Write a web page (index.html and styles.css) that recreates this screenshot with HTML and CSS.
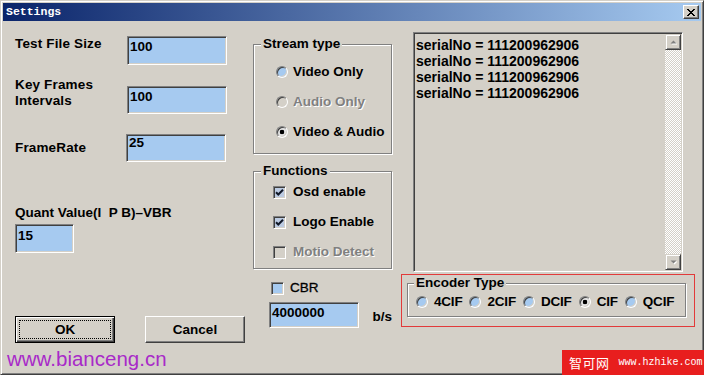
FILE: index.html
```html
<!DOCTYPE html>
<html>
<head>
<meta charset="utf-8">
<title>Settings</title>
<link rel="stylesheet" href="styles.css">
</head>
<body>
<div class="window">
  <div class="titlebar">
    <span class="title">Settings</span>
    <span class="close"><svg width="8" height="7" viewBox="0 0 8 7" shape-rendering="crispEdges"><path d="M0 0h2v1H0zM6 0h2v1H6zM1 1h2v1H1zM5 1h2v1H5zM2 2h4v1H2zM3 3h2v1H3zM2 4h4v1H2zM1 5h2v1H1zM5 5h2v1H5zM0 6h2v1H0zM6 6h2v1H6z" fill="#000"/></svg></span>
  </div>
  <div class="content">
    <div class="col-left">
      <div class="row row1"><span class="lbl">Test File Size</span><span class="edit e1">100</span></div>
      <div class="row row2"><span class="lbl">Key Frames<br>Intervals</span><span class="edit e2">100</span></div>
      <div class="row row3"><span class="lbl lbl3">FrameRate</span><span class="edit e3">25</span></div>
      <div class="lbl quant">Quant Value(I&nbsp; P B)–VBR</div>
      <span class="edit e4">15</span>
      <div class="buttons">
        <div class="btn btn-default"><span class="focus">OK</span></div>
        <div class="btn">Cancel</div>
      </div>
    </div>

    <div class="col-mid">
      <fieldset class="group stream">
        <legend>Stream type</legend>
        <div class="opt"><span class="radio"></span><span>Video Only</span></div>
        <div class="opt disabled"><span class="radio"></span><span>Audio Only</span></div>
        <div class="opt"><span class="radio checked"></span><span>Video &amp; Audio</span></div>
      </fieldset>
      <fieldset class="group functions">
        <legend>Functions</legend>
        <div class="opt"><span class="check on"><svg width="9" height="7" viewBox="0 0 9 7"><path d="M1 3.2l2.3 2.3L8 0.8" fill="none" stroke="#101828" stroke-width="2"/></svg></span><span>Osd enable</span></div>
        <div class="opt"><span class="check on"><svg width="9" height="7" viewBox="0 0 9 7"><path d="M1 3.2l2.3 2.3L8 0.8" fill="none" stroke="#101828" stroke-width="2"/></svg></span><span>Logo Enable</span></div>
        <div class="opt disabled"><span class="check"></span><span>Motio Detect</span></div>
      </fieldset>
      <div class="opt cbr"><span class="check blue"></span><span>CBR</span></div>
      <div class="rate-row"><span class="edit e5">4000000</span><span class="unit">b/s</span></div>
    </div>

    <div class="col-right">
      <div class="listbox">
        <div class="items">
          <div>serialNo = 111200962906</div>
          <div>serialNo = 111200962906</div>
          <div>serialNo = 111200962906</div>
          <div>serialNo = 111200962906</div>
        </div>
        <div class="vscroll">
          <div class="sbtn"><svg width="7" height="5" viewBox="0 0 7 5"><path d="M1.5 4.5h6L4.5 1.5z" fill="#fff"/><path d="M0.5 3.5h6L3.5 0.5z" fill="#808080"/></svg></div>
          <div class="track"></div>
          <div class="sbtn"><svg width="7" height="5" viewBox="0 0 7 5"><path d="M1.5 1.5h6L4.5 4.5z" fill="#fff"/><path d="M0.5 0.5h6L3.5 3.5z" fill="#808080"/></svg></div>
        </div>
      </div>
      <div class="encoder-frame">
        <fieldset class="group encoder">
          <legend>Encoder Type</legend>
          <div class="enc-row">
            <div class="opt"><span class="radio"></span><span>4CIF</span></div>
            <div class="opt"><span class="radio"></span><span>2CIF</span></div>
            <div class="opt"><span class="radio"></span><span>DCIF</span></div>
            <div class="opt"><span class="radio checked"></span><span>CIF</span></div>
            <div class="opt"><span class="radio"></span><span>QCIF</span></div>
          </div>
        </fieldset>
      </div>
    </div>
  </div>
</div>
<div class="wm-left">www.bianceng.cn</div>
<div class="wm-right"><span class="wm-cn">智可网</span><span class="wm-url">www.hzhike.com</span></div>
</body>
</html>
```
FILE: styles.css
```css
html, body {
  margin: 0;
  padding: 0;
  overflow: hidden;
}
body {
  width: 704px;
  height: 375px;
  position: relative;
  font-family: "Liberation Sans", Arial, sans-serif;
  font-weight: bold;
  font-size: 13.5px;
  line-height: 16px;
  color: #000;
  background: #d4d0c8;
}
.window {
  width: 704px;
  height: 375px;
  box-sizing: border-box;
  border: 1px solid;
  border-color: #d4d0c8 #404040 #404040 #d4d0c8;
  box-shadow: inset 1px 1px #fff, inset -1px -1px #808080;
  padding: 2px;
  background: #d4d0c8;
}
.titlebar {
  height: 18px;
  display: flex;
  align-items: center;
  justify-content: space-between;
  padding: 0 2px 0 3px;
  background: linear-gradient(to right, #0a246a, #a6caf0);
}
.title {
  font-family: "Liberation Mono", monospace;
  font-size: 11.5px;
  font-weight: bold;
  color: #fff;
  line-height: 18px;
}
.close {
  width: 16px;
  height: 14px;
  box-sizing: border-box;
  display: flex;
  align-items: center;
  justify-content: center;
  background: #d4d0c8;
  border: 1px solid;
  border-color: #fff #404040 #404040 #fff;
  box-shadow: inset -1px -1px #808080;
}
.content {
  display: flex;
  padding-left: 12px;
  gap: 8px;
}
.col-left {
  width: 230px;
  display: flex;
  flex-direction: column;
  align-items: flex-start;
}
.row {
  display: flex;
  align-items: flex-start;
}
.lbl {
  width: 112px;
  white-space: nowrap;
  letter-spacing: 0.15px;
}
.row1 { margin-top: 15px; }
.row2 { margin-top: 12px; }
.row2 .edit { margin-top: 9px; }
.row3 { margin-top: 20px; }
.lbl3 { width: 111px; margin-top: 6px; }
.quant { width: auto; margin-top: 43px; letter-spacing: 0; }
.edit {
  display: block;
  box-sizing: border-box;
  background: #a6caf0;
  border: 1px solid;
  border-color: #808080 #fff #fff #808080;
  box-shadow: inset 1px 1px #404040, inset -1px -1px #d4d0c8;
  padding: 2px 0 0 2px;
}
.e1 { width: 100px; height: 29px; }
.e2 { width: 100px; height: 28px; }
.e3 { width: 100px; height: 28px; padding-top: 0; }
.e4 { width: 59px; height: 29px; margin-top: 3px; padding-top: 3px; }
.e5 { width: 93px; height: 26px; }
.buttons {
  display: flex;
  gap: 30px;
  margin-top: 63px;
}
.btn {
  width: 100px;
  height: 27px;
  box-sizing: border-box;
  display: flex;
  align-items: center;
  justify-content: center;
  border: 1px solid;
  border-color: #fff #404040 #404040 #fff;
  box-shadow: inset -1px -1px #808080;
  background: #d4d0c8;
}
.btn-default {
  border: 1px solid #000;
  box-shadow: inset 1px 1px #fff, inset -1px -1px #404040, inset -2px -2px #808080;
  padding: 3px;
}
.focus {
  width: 100%;
  height: 100%;
  box-sizing: border-box;
  border: 1px dotted #000;
  display: flex;
  align-items: center;
  justify-content: center;
}

.col-mid {
  width: 139px;
  padding-top: 15px;
  display: flex;
  flex-direction: column;
}
.group {
  margin: 0;
  min-width: 0;
  padding: 0;
  border: 1px solid #808080;
  box-shadow: inset 1px 1px #fff, 1px 1px 0 #fff;
}
.group legend {
  margin-left: 7px;
  padding: 0 2px;
  line-height: 16px;
  background: #d4d0c8;
}
.opt {
  display: flex;
  align-items: center;
  height: 16px;
  white-space: nowrap;
}
.disabled {
  color: #808080;
  text-shadow: 1px 1px #fff;
}
.stream {
  padding-bottom: 13px;
}
.stream .opt { gap: 5px; margin: 14px 0 0 22px; }
.stream .opt:first-of-type { margin-top: 12px; }
.radio {
  width: 12px;
  height: 12px;
  flex: none;
  box-sizing: border-box;
  border-radius: 50%;
  border: 1px solid;
  border-color: #808080 #fff #fff #808080;
  box-shadow: inset 1px 1px #404040, inset -1px -1px #d4d0c8;
  background: #a6caf0;
}
.disabled .radio { background: #d4d0c8; }
.radio.checked {
  background: radial-gradient(circle, #000 0 2px, #e4e4e4 2.6px);
}
.functions {
  margin-top: 9px;
  padding-bottom: 8px;
}
.functions .opt { gap: 7px; margin: 14px 0 0 19px; }
.functions .opt:first-of-type { margin-top: 5px; }
.check {
  width: 13px;
  height: 13px;
  flex: none;
  box-sizing: border-box;
  display: flex;
  align-items: center;
  justify-content: center;
  border: 1px solid;
  border-color: #808080 #fff #fff #808080;
  box-shadow: inset 1px 1px #404040, inset -1px -1px #d4d0c8;
  background: #d4d0c8;
}
.check.on { background: #bccbe2; }
.check.blue { background: #a6caf0; }
.cbr {
  margin-top: 11px;
  padding-left: 18px;
  gap: 6px;
  font-weight: normal;
  -webkit-text-stroke: 0.3px #000;
}
.rate-row {
  display: flex;
  align-items: flex-start;
  margin-top: 6px;
  padding-left: 16px;
}
.unit { margin: 7px 0 0 13px; }

.col-right {
  width: 294px;
  margin-left: 1px;
  display: flex;
  flex-direction: column;
}
.listbox {
  margin: 11px 0 0 12px;
  width: 270px;
  height: 240px;
  box-sizing: border-box;
  display: flex;
  border: 1px solid;
  border-color: #808080 #fff #fff #808080;
  box-shadow: inset 1px 1px #404040, inset -1px -1px #d4d0c8;
  padding: 1px;
}
.items {
  flex: 1;
  padding: 3px 0 0 1px;
  font-size: 14px;
}
.vscroll {
  width: 16px;
  display: flex;
  flex-direction: column;
}
.sbtn {
  width: 16px;
  height: 16px;
  box-sizing: border-box;
  display: flex;
  align-items: center;
  justify-content: center;
  border: 1px solid;
  border-color: #d4d0c8 #404040 #404040 #d4d0c8;
  box-shadow: inset 1px 1px #fff, inset -1px -1px #808080;
  background: #d4d0c8;
}
.track {
  flex: 1;
  background: repeating-conic-gradient(#fff 0 25%, #d4d0c8 0 50%) 0 0 / 2px 2px;
}
.encoder-frame {
  margin-top: 2px;
  height: 53px;
  box-sizing: border-box;
  border: 1px solid #e23a3a;
  padding: 0 8px 0 5px;
}
.encoder {
  padding-bottom: 6px;
}
.encoder legend { margin-left: 6px; }
.enc-row {
  display: flex;
  gap: 7px;
  margin: 3px 0 0 8px;
}
.enc-row .opt { gap: 6px; letter-spacing: -0.2px; }

.wm-left {
  position: absolute;
  left: 7px;
  top: 349px;
  font-family: "Liberation Sans", Arial, sans-serif;
  font-weight: normal;
  font-size: 20.5px;
  line-height: 20px;
  color: #a82ac8;
}
.wm-right {
  position: absolute;
  left: 562px;
  top: 350px;
  width: 142px;
  height: 25px;
  box-sizing: border-box;
  padding-left: 7px;
  display: flex;
  align-items: center;
  gap: 9px;
  background: #e81e1e;
  color: #fff;
  font-weight: normal;
}
.wm-cn {
  font-family: "Noto Sans CJK SC", sans-serif;
  font-size: 13px;
  letter-spacing: 0.5px;
}
.wm-url {
  font-family: "Liberation Mono", monospace;
  font-size: 10px;
}
```
